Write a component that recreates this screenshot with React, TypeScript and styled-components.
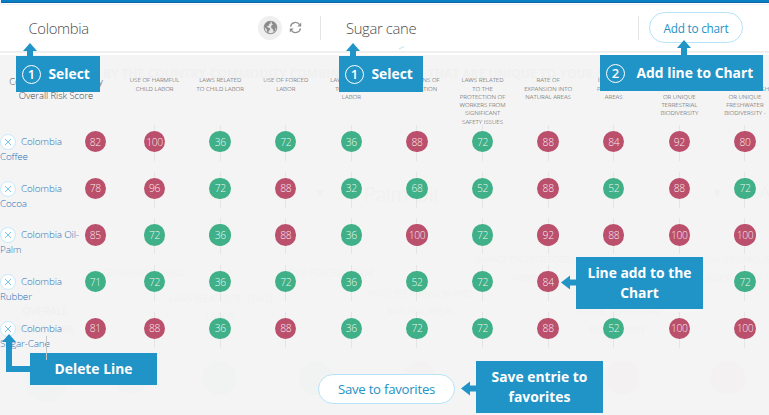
import React from "react";
import styled, { createGlobalStyle } from "styled-components";

const BLUE = "#2194c7";
const GREEN = "#40b088";
const RED = "#bb506d";

const GlobalStyle = createGlobalStyle`
  * { box-sizing: border-box; }
  body { margin: 0; overflow: hidden; background: #f4f4f4; font-family: "Open Sans", sans-serif; }
`;

const Page = styled.div`
  position: relative;
  width: 769px;
  height: 415px;
  overflow: hidden;
  background: #f4f4f4;
`;

const TopBar = styled.div`
  height: 3px;
  margin-left: 1px;
  background: #0880c3;
  border-bottom: 1px solid #0c65a4;
`;

const Toolbar = styled.header`
  display: flex;
  align-items: center;
  height: 52px;
  padding: 0 0 3px 28.500px;
  background: linear-gradient(#fff 1px, #f0f0f0 1px, #f0f0f0 2px, #fff 2px, #fff 48px, #ebebeb 48px, #f3f3f3 50px, #fff 50px);
`;

const Choice = styled.div<{ $width: number }>`
  width: ${(p) => p.$width}px;
  padding-top: 1px;
  font-size: 14.8px;
  font-weight: 300;
  letter-spacing: -0.35px;
  line-height: 20px;
  color: #4c4c4c;
`;

const GlobeButton = styled.div`
  display: flex;
  align-items: center;
  justify-content: center;
  width: 24px;
  height: 24px;
  margin-right: 7px;
  border-radius: 50%;
  background: #efefef;
`;

const Divider = styled.div<{ $left: number; $right: number }>`
  width: 1px;
  height: 24px;
  margin: 0 ${(p) => p.$right}px 0 ${(p) => p.$left}px;
  background: #e4e4e4;
`;

const PillButton = styled.button<{ $width: number; $height: number; $size: number }>`
  display: flex;
  align-items: center;
  justify-content: center;
  width: ${(p) => p.$width}px;
  height: ${(p) => p.$height}px;
  padding: 0;
  border: 1px solid #b5e4f8;
  border-radius: 16px;
  background: #fff;
  color: #2592c5;
  font: 400 ${(p) => p.$size}px "Open Sans", sans-serif;
  letter-spacing: -0.25px;
  white-space: nowrap;
`;

const HeadRow = styled.div`
  display: grid;
  grid-template-columns: 112px 9.8px repeat(10, 65.6px);
  height: 70px;
  padding-top: 21.4px;
`;

const HeadTitle = styled.div`
  margin-top: -1px;
  font-size: 9.5px;
  font-weight: 300;
  letter-spacing: -0.07px;
  line-height: 13.5px;
  text-align: center;
  color: #444;
  white-space: pre;
`;

const HeadCell = styled.div`
  font-size: 6.15px;
  font-weight: 300;
  line-height: 8.25px;
  text-align: center;
  color: #444;
  white-space: pre;
`;

const DataRow = styled.div`
  display: grid;
  grid-template-columns: 78.8px 33px 10px repeat(10, 65.6px);
  height: 46.65px;
`;

const RowLabel = styled.div`
  padding-top: 9px;
  font-size: 9.9px;
  font-weight: 300;
  letter-spacing: -0.15px;
  line-height: 15px;
  color: #2f72b6;
  white-space: nowrap;
`;

const LabelTop = styled.div`
  display: flex;
  gap: 5px;
`;

const RemoveButton = styled.span`
  display: flex;
  align-items: center;
  justify-content: center;
  width: 16px;
  height: 16px;
  margin-bottom: -1px;
  border: 1px solid #c8ebfa;
  border-radius: 50%;
  background: #fff;
`;

const ScoreCell = styled.div<{ $line?: boolean }>`
  display: flex;
  justify-content: center;
  height: 36px;
  padding-top: 6px;
  background: ${(p) => (p.$line ? "linear-gradient(#e5e5e5, #e5e5e5) center / 1px 36px no-repeat" : "none")};
`;

const Score = styled.span<{ $high: boolean }>`
  display: flex;
  align-items: center;
  justify-content: center;
  width: 21.4px;
  height: 21.4px;
  border-radius: 50%;
  background: ${(p) => (p.$high ? RED : GREEN)};
  color: rgba(255, 255, 255, 0.9);
  font-size: 10.3px;
  font-weight: 300;
  letter-spacing: -0.35px;
`;

const SaveSlot = styled.div`
  display: flex;
  padding: 15.6px 0 0 318px;
`;

const Callout = styled.div<{ $x: number; $y: number; $w: number; $h: number; $start?: number }>`
  position: absolute;
  left: ${(p) => p.$x}px;
  top: ${(p) => p.$y}px;
  display: flex;
  align-items: center;
  justify-content: ${(p) => (p.$start ? "flex-start" : "center")};
  width: ${(p) => p.$w}px;
  height: ${(p) => p.$h}px;
  padding-left: ${(p) => p.$start ?? 0}px;
  background: ${BLUE};
  color: #fff;
  font-size: 13.85px;
  font-weight: 700;
  line-height: 20px;
  text-align: center;
  white-space: pre;
`;

const Step = styled.span<{ $gap: number }>`
  display: flex;
  align-items: center;
  justify-content: center;
  width: 19px;
  height: 19px;
  margin-right: ${(p) => p.$gap}px;
  border: 1px solid #fff;
  border-radius: 50%;
  font-size: 13px;
  font-weight: 600;
`;

const Overlay = styled.svg`
  position: absolute;
  left: 0;
  top: 0;
  pointer-events: none;
`;

const Ghost = styled.div<{ $x: number; $y: number; $size: number; $weight?: number }>`
  position: absolute;
  left: ${(p) => p.$x}px;
  top: ${(p) => p.$y}px;
  color: #f0f0f0;
  font-size: ${(p) => p.$size}px;
  font-weight: ${(p) => p.$weight ?? 300};
  line-height: 18px;
  text-align: center;
  white-space: pre;
`;

const GhostRow = styled.div`
  position: absolute;
  left: 26px;
  top: 361px;
  display: flex;
  align-items: flex-start;
`;

const GhostDot = styled.div<{ $gap: number; $d: number; $warm?: boolean }>`
  display: flex;
  align-items: center;
  justify-content: center;
  width: ${(p) => p.$d}px;
  height: ${(p) => p.$d}px;
  margin-right: ${(p) => p.$gap}px;
  border-radius: 50%;
  background: ${(p) => (p.$warm ? "#f4f1f2" : "#f0f3f2")};
  color: #f4f4f4;
  font-size: 13px;
`;

const Content = styled.div`
  position: relative;
`;

const headings = [
  "USE OF HARMFUL\nCHILD LABOR",
  "LAWS RELATED\nTO CHILD LABOR",
  "USE OF FORCED\nLABOR",
  "LAWS RELATED\nTO FORCED\nLABOR",
  "CONDITIONS OF\nEXPLOITATION",
  "LAWS RELATED\nTO THE\nPROTECTION OF\nWORKERS FROM\nSIGNIFICANT\nSAFETY ISSUES",
  "RATE OF\nEXPANSION INTO\nNATURAL AREAS",
  "IMPACT ON\nPROTECTED\nAREAS",
  "RELATED TO\nAREAS OF HIGH\nOR UNIQUE\nTERRESTRIAL\nBIODIVERSITY",
  "RELATED TO\nIMPACT ON HIGH\nOR UNIQUE\nFRESHWATER\nBIODIVERSITY -",
];

const rows = [
  { a: "Colombia", b: "Coffee", v: [82, 100, 36, 72, 36, 88, 72, 88, 84, 92, 80] },
  { a: "Colombia", b: "Cocoa", v: [78, 96, 72, 88, 32, 68, 52, 88, 52, 88, 72] },
  { a: "Colombia Oil-", b: "Palm", v: [85, 72, 36, 88, 36, 100, 72, 92, 88, 100, 100] },
  { a: "Colombia", b: "Rubber", v: [71, 72, 36, 72, 36, 52, 72, 84, 72, 88, 72] },
  { a: "Colombia", b: "Sugar-Cane", v: [81, 88, 36, 88, 36, 72, 72, 88, 52, 100, 100] },
];

const ghostDots = [
  { d: 41, gap: 48 },
  { d: 33, gap: 54 },
  { d: 34, gap: 63 },
  { d: 34, gap: 70 },
  { d: 32, gap: 170, warm: true },
  { d: 34, gap: 72, warm: true },
  { d: 34, gap: 0, warm: true },
];

const Globe = () => (
  <svg width="15" height="15" viewBox="0 0 15 15">
    <circle cx="7.5" cy="7.5" r="6.3" fill="#e6e6e6" stroke="#949494" strokeWidth="1.1" />
    <path d="M2 4.2 4.3 1.8 7.2 1.3 7.8 3 6.3 4.2 5.7 5.7 4 6.2 4.8 7.4 6.9 8 7.1 9.7 5.7 11.1 5.5 13.2 4.2 12 3.7 9.3 1.7 7.2ZM8.7 2.2 10.8 1.8 13 4.5 13.7 7.7 12.5 8.1 12.3 10.6 10.7 12 9.9 9.2 8.1 7.8 8.3 5.5 10 4.6 8.8 3.7Z" fill="#8c8c8c" />
  </svg>
);

const Refresh = () => (
  <svg width="13" height="13" viewBox="0 0 13 13" fill="none" stroke="#8f8f8f" strokeWidth="1.3">
    <path d="M1.5 5.6A5 5 0 0 1 10.6 3.7M11.5 7.4A5 5 0 0 1 2.4 9.3" />
    <path d="M12.2 1.5V5.5H8.3ZM.8 11.5V7.5H4.7Z" fill="#8f8f8f" stroke="none" />
  </svg>
);

export default function App() {
  return (
    <Page>
      <GlobalStyle />
      <Ghost $x={103} $y={65} $size={12} $weight={700}>BY THE COUNTRY-COMMODITY COMBINATIONS</Ghost>
      <Ghost $x={428} $y={65} $size={12} $weight={700}>THAT ARE UNIQUE TO YOUR SUPPLY</Ghost>
      <Ghost $x={364} $y={186} $size={20}>Palm Oil</Ghost>
      <Ghost $x={315} $y={183} $size={10}>▼</Ghost>
      <Ghost $x={712} $y={183} $size={10}>▼</Ghost>
      <Ghost $x={760} $y={183} $size={17}>A</Ghost>
      <Ghost $x={84} $y={264} $size={9}>USE OF HARMFUL CHILD</Ghost>
      <Ghost $x={169} $y={290} $size={9}>{"LAWS RELATED TO CHILD\nLABOR"}</Ghost>
      <Ghost $x={277} $y={264} $size={9}>USE OF FORCED LABOR</Ghost>
      <Ghost $x={367} $y={285} $size={9}>{"RATE OF EXPANSION INTO\nNATURAL AREAS"}</Ghost>
      <Ghost $x={476} $y={251} $size={9}>{"IMPACT ON PROTECTED\nAREAS"}</Ghost>
      <Ghost $x={573} $y={303} $size={9}>{"UNIQUE TERRESTRIAL\nBIODIVERSITY"}</Ghost>
      <Ghost $x={698} $y={251} $size={9}>{"HIGH OR UNIQUE\nBIODIVERSITY"}</Ghost>
      <Ghost $x={16} $y={302} $size={10.5} $weight={600}>{"OVERALL\nRISK SCORE"}</Ghost>
      <GhostRow>
        {ghostDots.map((g, i) => (
          <GhostDot key={i} $gap={g.gap} $d={g.d} $warm={g.warm}>12</GhostDot>
        ))}
      </GhostRow>

      <Content>
        <TopBar />
        <Toolbar>
          <Choice $width={229.5}>Colombia</Choice>
          <GlobeButton><Globe /></GlobeButton>
          <Refresh />
          <Divider $left={18} $right={25} />
          <Choice $width={268}>Sugar cane</Choice>
          <Divider $left={24} $right={10} />
          <PillButton $width={94} $height={31} $size={11.8}>Add to chart</PillButton>
        </Toolbar>
        <HeadRow>
          <HeadTitle>{"Country & Commodity\nOverall Risk Score"}</HeadTitle>
          <span />
          {headings.map((h, i) => <HeadCell key={i}>{h}</HeadCell>)}
        </HeadRow>
        {rows.map((r, i) => (
          <DataRow key={i}>
            <RowLabel>
              <LabelTop>
                <RemoveButton>
                  <svg width="8" height="8" viewBox="0 0 8 8" stroke="#66bfe0" strokeWidth=".9">
                    <path d="M1 1l6 6M7 1l-6 6" />
                  </svg>
                </RemoveButton>
                {r.a}
              </LabelTop>
              {r.b}
            </RowLabel>
            <ScoreCell><Score $high={r.v[0] > 72}>{r.v[0]}</Score></ScoreCell>
            <span />
            {r.v.slice(1).map((v, k) => (
              <ScoreCell key={k} $line><Score $high={v > 72}>{v}</Score></ScoreCell>
            ))}
          </DataRow>
        ))}
        <SaveSlot>
          <PillButton $width={137} $height={30} $size={13.2}>Save to favorites</PillButton>
        </SaveSlot>
      </Content>

      <Callout $x={16} $y={56} $w={84} $h={36} $start={6}><Step $gap={7.5}>1</Step>Select</Callout>
      <Callout $x={339} $y={56} $w={84} $h={36} $start={6}><Step $gap={7.5}>1</Step>Select</Callout>
      <Callout $x={600} $y={55} $w={163} $h={36} $start={6}><Step $gap={11.5}>2</Step>Add line to Chart</Callout>
      <Callout $x={576} $y={257} $w={127} $h={52}>{"Line add to the\nChart"}</Callout>
      <Callout $x={476} $y={361} $w={127} $h={52}>{"Save entrie to\nfavorites"}</Callout>
      <Callout $x={30} $y={353} $w={127} $h={32}>Delete Line</Callout>
      <Overlay width="769" height="415">
        <g fill={BLUE}>
          <path d="M30 43l7 8h-4v5h-6v-5h-4z" />
          <path d="M353 43l7 8h-4v5h-6v-5h-4z" />
          <path d="M684 40l7 8h-4v7h-6v-7h-4z" />
          <path d="M561 282.500l9-7v4h6v6h-6v4z" />
          <path d="M461 388.500l9-7v4h6v6h-6v4z" />
          <path d="M9 334l7 8h-4v24h18v6H6v-30H2z" />
        </g>
        <path d="M46.500 336v24" stroke="#c4c7c8" />
        <path d="M399 49l5-2.500" stroke="#b7e2ef" />
      </Overlay>
    </Page>
  );
}
